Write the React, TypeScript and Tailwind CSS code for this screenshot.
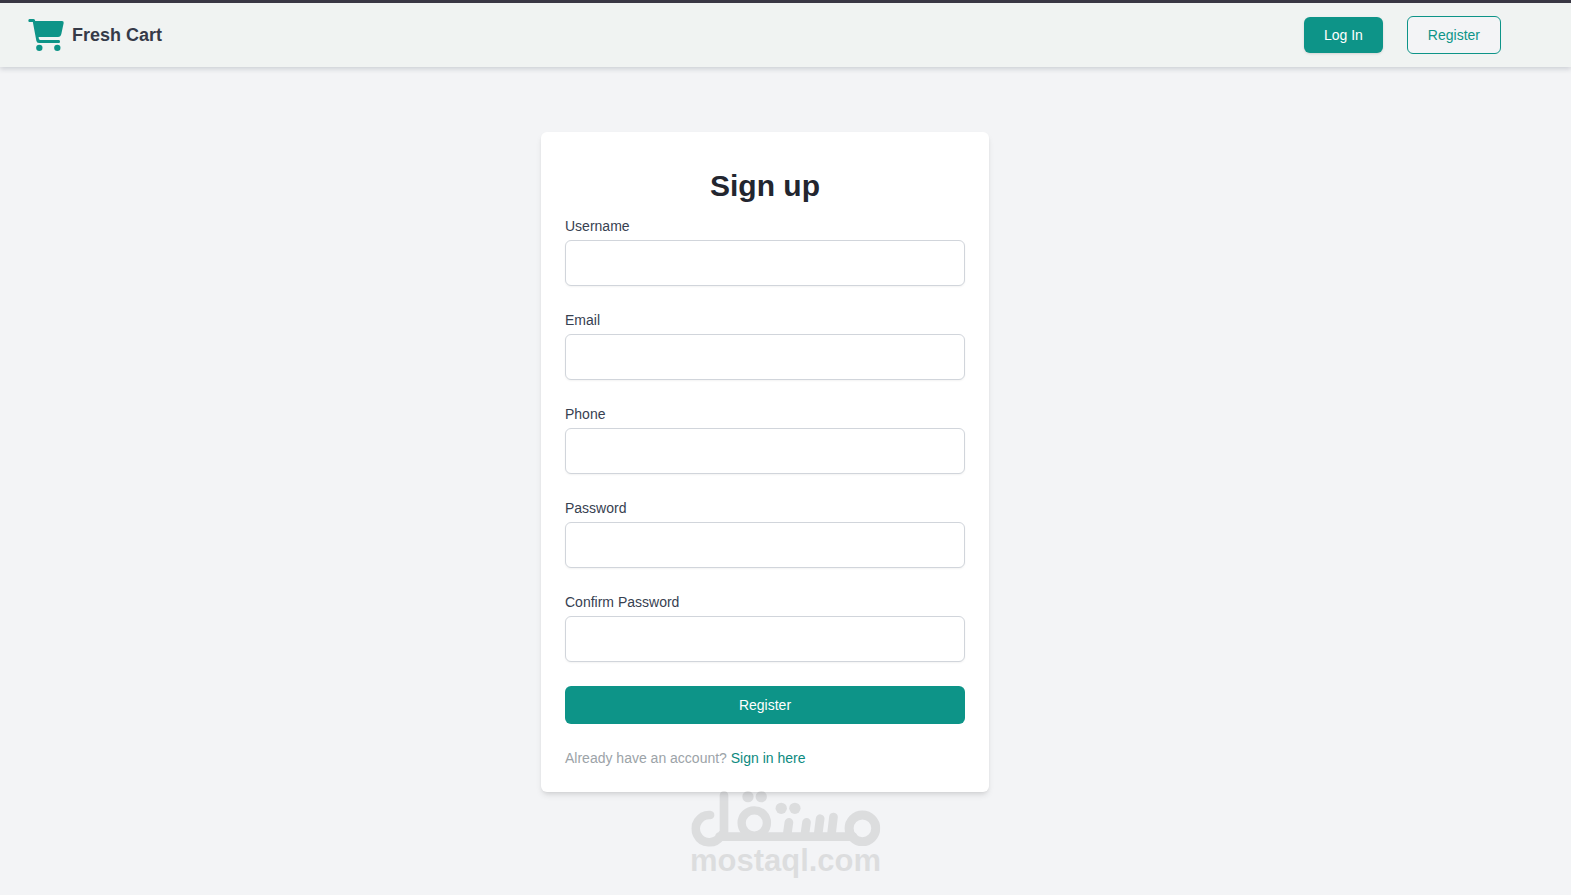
import React from "react";

const fields = [
  { id: "username", label: "Username", type: "text" },
  { id: "email", label: "Email", type: "email" },
  { id: "phone", label: "Phone", type: "tel" },
  { id: "password", label: "Password", type: "password" },
  { id: "confirm-password", label: "Confirm Password", type: "password" },
];

function CartIcon() {
  return (
    <svg viewBox="-1 0 108 96" className="h-8 w-9 text-[#0d9488]" fill="currentColor" aria-hidden="true">
      <path d="M3.500 0H15Q19 0 20 4L20.500 6H101Q107 6 106 12L99 45Q97 54 89 54H31Q31 63 36 63H92Q95 63 95 67.500Q95 72 92 72H32Q25 72 24 65L13.500 9H3.500Q0 9 0 4.500Q0 0 3.500 0Z" />
      <circle cx="33" cy="86.500" r="9.500" />
      <circle cx="87" cy="86.500" r="9.500" />
    </svg>
  );
}

function Header() {
  return (
    <header className="relative flex h-[67px] items-center justify-between border-t-3 border-[#393744] bg-[#f0f3f2] pr-[70px] pl-7 shadow-[0_2px_5px_rgba(30,41,59,0.18)]">
      <a href="#home" className="flex items-center gap-2">
        <CartIcon />
        <span className="text-lg font-bold text-[#353a48]">Fresh Cart</span>
      </a>
      <nav className="flex items-center gap-6">
        <button type="button" className="rounded-md bg-[#0d9488] px-5 py-2 text-sm text-white shadow-sm">
          Log In
        </button>
        <button type="button" className="rounded-md border border-[#0d9488] bg-[#f3f4f6] px-5 py-2 text-sm text-[#0d9488]">
          Register
        </button>
      </nav>
    </header>
  );
}

function SignUpForm() {
  return (
    <form className="w-full max-w-md rounded-md bg-white px-6 pt-9 pb-6 shadow-md" onSubmit={(e) => e.preventDefault()}>
      <h1 className="mb-3 text-center text-3xl font-bold text-[#23262f]">Sign up</h1>
      <div className="flex flex-col gap-6">
        {fields.map((field) => (
          <div key={field.id} className="flex flex-col gap-1">
            <label htmlFor={field.id} className="text-sm text-[#374151]">
              {field.label}
            </label>
            <input
              id={field.id}
              type={field.type}
              className="h-[46px] w-full rounded-md border border-[#d1d5db] bg-white px-3 text-sm shadow-xs outline-none focus:border-[#0d9488]"
            />
          </div>
        ))}
        <button type="submit" className="h-[38px] w-full rounded-md bg-[#0d9488] text-sm text-white">
          Register
        </button>
        <p className="text-sm text-[#9ca3a8]">
          Already have an account?{" "}
          <a href="#login" className="text-[#0d8a80]">
            Sign in here
          </a>
        </p>
      </div>
    </form>
  );
}

function Watermark() {
  return (
    <div className="pointer-events-none absolute bottom-5 left-1/2 flex -translate-x-1/2 flex-col items-center opacity-[0.09]">
      <svg viewBox="62 60 568 168" className="h-14 w-[189px]" fill="none" stroke="#000" strokeLinecap="round" strokeLinejoin="round" aria-hidden="true">
        <path strokeWidth="26" d="M118 132A41 41 0 1 0 150 196L160 184V73M146 197H548M355 154L349 197M408 154L402 197M449 143L442 197M489 138L482 197" />
        <circle cx="251" cy="156" r="38" strokeWidth="25" />
        <circle cx="576" cy="172" r="40" strokeWidth="27" />
        <g fill="#000" stroke="none">
          <circle cx="232" cy="77" r="17" />
          <circle cx="272" cy="77" r="17" />
          <circle cx="332" cy="112" r="17" />
          <circle cx="373" cy="112" r="17" />
        </g>
      </svg>
      <span className="text-[31px] leading-7 font-bold text-black">mostaql.com</span>
    </div>
  );
}

export default function App() {
  return (
    <div className="relative min-h-screen bg-[#f3f4f6] font-['Liberation_Sans',Arial,sans-serif]">
      <Header />
      <main className="flex justify-center pt-[65px] pr-[41px] pb-16">
        <SignUpForm />
      </main>
      <Watermark />
    </div>
  );
}
